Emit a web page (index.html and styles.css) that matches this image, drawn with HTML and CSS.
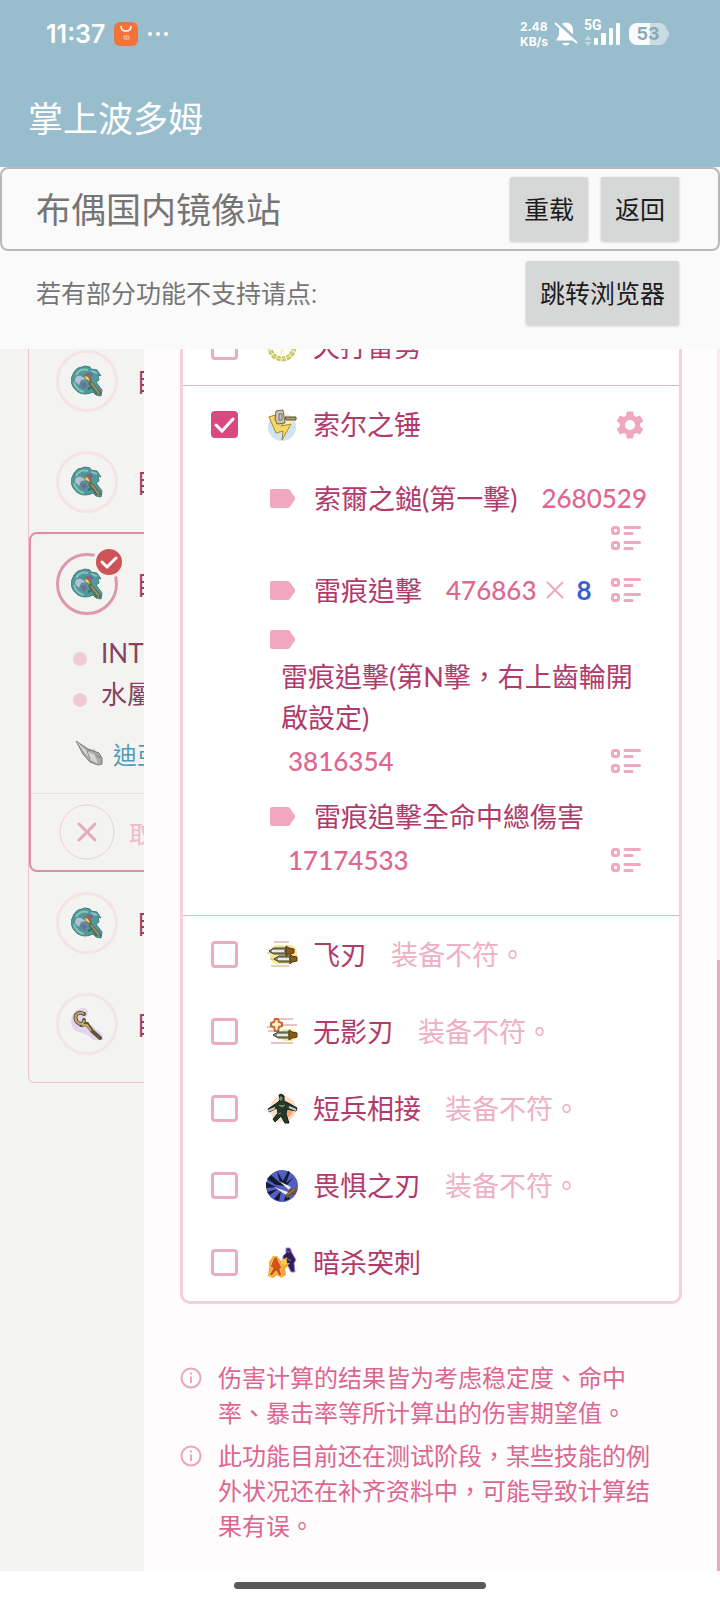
FILE: index.html
```html
<!DOCTYPE html>
<html lang="zh-CN">
<head>
    <meta charset="UTF-8">
    <meta name="viewport" content="width=device-width, initial-scale=1.0">
    <title>掌上波多姆</title>
    <link rel="stylesheet" href="styles.css">
</head>
<body>
    <svg class="sprite" aria-hidden="true">
        <symbol id="tag" viewBox="0 0 25 19">
            <path d="M2 0h15.500q1.500 0 2.500 1.200l5 7.300q.7 1 0 2l-5 7.300q-1 1.200-2.500 1.200H2q-2 0-2-2V2q0-2 2-2z" fill="#f1a7bf"/>
        </symbol>
        <symbol id="list" viewBox="0 0 30 26">
            <g fill="none" stroke="#f1a7bf" stroke-width="3" stroke-linecap="round">
                <rect x="1.500" y="2.500" width="6" height="6" rx="2"/>
                <rect x="1.500" y="17.500" width="6" height="6" rx="2"/>
                <path d="M14 2.500h14.500M14 8.500h7M14 17.500h14.500M14 23.500h7"/>
            </g>
        </symbol>
        <symbol id="axe" viewBox="0 0 32 32">
            <path d="M3 7q3-5 8-5l3-1 5 1 1 2 6 1 4 6-3-1 1 5-3 2 6 8-1 6-5-1-3-3q-8 4-15 0-7-5-7-13z" fill="#4f9a98" stroke="#44807f"/>
            <path d="M5 10q4-7 12-5M20 6l6 2M3 17q2 8 10 10" fill="none" stroke="#83c3bd" stroke-width="2"/>
            <path d="M4 16q0-6 6-5l5 3-5 1-2 5z" fill="#b9bfd3"/>
            <path d="M9 18l5-1 2 3-3 4zM15 8l6-1 1 4-4 2z" fill="#76689f"/>
            <path d="M17 24q3-1 4-3" fill="none" stroke="#356d70" stroke-width="2"/>
            <path d="M13 10l4-1 4 5-2 4-4-3z" fill="#8f6c3f"/>
            <path d="M14 11l3 1 2 4-4-2z" fill="#f4d27a"/>
            <path d="M19 16l11 13M18 18l8 11" stroke="#55694f" stroke-width="2"/>
            <path d="M20 18l8 10" stroke="#a08d60" stroke-width="2"/>
        </symbol>
        <symbol id="info" viewBox="0 0 22 22">
            <circle cx="11" cy="11" r="9.500" fill="none" stroke="#eba5be" stroke-width="2"/>
            <path d="M11 9.500v6.500M11 5.500v2" stroke="#eba5be" stroke-width="2"/>
        </symbol>
    </svg>

    <div class="app">
        <div class="status-bar">
            <span class="clock">11:37</span>
            <svg class="shop-icon" viewBox="0 0 24 24">
                <rect width="24" height="24" rx="6" fill="#f1733a"/>
                <path d="M7 4q0 5 5 5t5-5" fill="none" stroke="#fff" stroke-width="1.500"/>
                <path d="M10 14h5v3h-5zM12.500 14v3" fill="none" stroke="#fbc3a2"/>
            </svg>
            <svg class="more-icon" viewBox="0 0 22 6" fill="#fff">
                <circle cx="3" cy="3" r="2"/><circle cx="11" cy="3" r="2"/><circle cx="19" cy="3" r="2"/>
            </svg>
            <div class="status-right">
                <span class="speed">2.48<br>KB/s</span>
                <svg class="bell-icon" viewBox="0 0 24 26">
                    <path d="M12 1.500q7 .5 7 8v5l3 5H2l3-5v-5q0-7.500 7-8zM8 22h8q-1.500 2.500-4 2.500T8 22z" fill="#fff"/>
                    <path d="M2 0l22 21" stroke="#98bdcd" stroke-width="4"/>
                    <path d="M1 2l22 20" stroke="#fff" stroke-width="2"/>
                </svg>
                <span class="signal">
                    <span class="network">5G</span>
                    <svg class="signal-icon" viewBox="0 0 37 24" fill="#fff">
                        <path d="M4 13l3.500 5h-7zM4 24l3.500-4h-7z" opacity=".4"/>
                        <rect x="10" y="16" width="4" height="7" rx="1"/>
                        <rect x="17" y="11" width="5" height="12" rx="1"/>
                        <rect x="25" y="6" width="4" height="17" rx="1"/>
                        <rect x="32" y="1" width="4" height="22" rx="1"/>
                    </svg>
                </span>
                <span class="battery">53</span>
            </div>
        </div>

        <header class="title-bar">
            <h1>掌上波多姆</h1>
        </header>

        <div class="site-bar">
            <span class="site-name">布偶国内镜像站</span>
            <button class="app-btn">重载</button>
            <button class="app-btn">返回</button>
        </div>
        <div class="jump-bar">
            <span class="jump-text">若有部分功能不支持请点:</span>
            <button class="app-btn">跳转浏览器</button>
        </div>

        <div class="webview" lang="zh-TW">
            <aside class="sidebar">
                <div class="equip-list">
                    <div class="equip">
                        <span class="ring"><svg class="equip-icon"><use href="#axe"/></svg></span>
                        <span class="equip-name">目</span>
                    </div>
                    <div class="equip">
                        <span class="ring"><svg class="equip-icon"><use href="#axe"/></svg></span>
                        <span class="equip-name">目</span>
                    </div>
                    <div class="equip-selected">
                        <div class="equip">
                            <span class="ring active">
                                <svg class="equip-icon"><use href="#axe"/></svg>
                                <svg class="ring-badge" viewBox="0 0 32 32">
                                    <circle cx="16" cy="16" r="16" fill="#f3f4f2"/>
                                    <circle cx="16" cy="16" r="13" fill="#cc5356"/>
                                    <path d="M9 16l5 5 9-9" fill="none" stroke="#fff" stroke-width="3" stroke-linecap="round"/>
                                </svg>
                            </span>
                            <span class="equip-name">目</span>
                        </div>
                        <ul class="stats">
                            <li>INT</li>
                            <li>水屬性</li>
                        </ul>
                        <div class="crystal">
                            <svg class="crystal-icon" viewBox="0 0 28 26">
                                <path d="M1 1l12 8 11 4 3 5v6l-4 1-8-3-7-8z" fill="#a9a9a7" stroke="#777"/>
                                <path d="M1 1l11 10 8 4 3 9-7-4-7-8z" fill="#d5d5d2"/>
                                <path d="M12 11l8-1M20 15l6 3M12 11l3 8" stroke="#8a8a88"/>
                            </svg>
                            <a href="#">迪亞</a>
                        </div>
                        <button class="cancel">
                            <svg class="cancel-icon" viewBox="0 0 56 56" fill="none">
                                <circle cx="28" cy="28" r="27" stroke="#f1cdd6"/>
                                <path d="M20 20l16 16M36 20l-16 16" stroke="#e8aabb" stroke-width="3" stroke-linecap="round"/>
                            </svg>
                            <span>取消</span>
                        </button>
                    </div>
                    <div class="equip">
                        <span class="ring"><svg class="equip-icon"><use href="#axe"/></svg></span>
                        <span class="equip-name">目</span>
                    </div>
                    <div class="equip">
                        <span class="ring">
                            <svg class="equip-icon" viewBox="0 0 32 32" fill="none">
                                <path d="M12 5a8 8 0 0 0-4 14l10 3 10 8" stroke="#e3d5f1" stroke-width="10" stroke-linecap="round" stroke-linejoin="round"/>
                                <path d="M13 6q-5-3-8 1-2 6 4 9 4 0 4-4M10 17l6-1 5 7 8 7" stroke="#625338" stroke-width="4" stroke-linecap="round"/>
                                <path d="M13 6q-5-3-8 1-2 6 4 9 4 0 4-4M11 17l5 0 4 6" stroke="#bda768" stroke-width="2"/>
                            </svg>
                        </span>
                        <span class="equip-name">目</span>
                    </div>
                </div>
            </aside>

            <main class="content">
                <div class="skills">
                    <div class="skill">
                        <input type="checkbox" id="s0">
                        <svg class="skill-icon" viewBox="0 0 32 32" fill="none">
                            <circle cx="16" cy="16" r="12" stroke="#c6c467" stroke-width="5" stroke-dasharray="4 1"/>
                            <circle cx="16" cy="16" r="12" stroke="#ebe9a4"/>
                            <path d="M14 8l-4 9h5l-2 9 8-12h-5l4-6z" fill="#f8f2b0"/>
                        </svg>
                        <label for="s0">天打雷劈</label>
                    </div>

                    <div class="skill-open">
                        <div class="skill">
                            <input type="checkbox" id="s1" checked>
                            <svg class="skill-icon" viewBox="0 0 32 32">
                                <circle cx="16" cy="18" r="14" fill="#cfe3f5"/>
                                <path d="M5 8l9-5 8 2 6 6-4 7H10z" fill="#f6efc8"/>
                                <path d="M3 8l6-2 2 8 8-2-4 5 10-2-9 16 1-9-7 2z" fill="#f3d964" stroke="#a78832"/>
                                <path d="M10 2l7-1 2 13-8 1-2-5z" fill="#c9c6b8" stroke="#6e6858"/>
                                <path d="M13 5h3v6h-3z" fill="none" stroke="#77715f"/>
                                <path d="M19 8h11v3H20z" fill="#b59a6a" stroke="#5d4d36"/>
                            </svg>
                            <label for="s1">索尔之锤</label>
                            <button class="gear" aria-label="設定">
                                <svg viewBox="2 2 20 20" width="28" height="28" fill="#f1a7bf">
                                    <path d="M19.140 12.940c.04-.3.060-.61.060-.94s-.02-.64-.07-.94l2.030-1.580a.49.49 0 0 0 .12-.61l-1.920-3.320a.49.49 0 0 0-.59-.22l-2.390.96c-.5-.38-1.030-.7-1.620-.94l-.36-2.540a.48.48 0 0 0-.48-.41h-3.840c-.24 0-.43.17-.47.41l-.36 2.540c-.59.24-1.130.57-1.620.94l-2.390-.96a.48.48 0 0 0-.59.22L2.740 8.870a.48.48 0 0 0 .12.610l2.030 1.580c-.05.3-.09.63-.09.94s.02.64.07.94l-2.030 1.580a.49.49 0 0 0-.12.610l1.920 3.320c.12.22.37.29.59.22l2.390-.96c.5.38 1.030.7 1.620.94l.36 2.540c.05.24.24.41.48.41h3.840c.24 0 .44-.17.47-.41l.36-2.540c.59-.24 1.130-.56 1.620-.94l2.390.96c.22.08.47 0 .59-.22l1.920-3.320a.48.48 0 0 0-.12-.61zM12 15.600a3.600 3.600 0 1 1 0-7.200 3.600 3.600 0 0 1 0 7.200z"/>
                                </svg>
                            </button>
                        </div>
                        <div class="hits">
                            <div class="hit">
                                <svg class="tag"><use href="#tag"/></svg>
                                <span class="hit-name">索爾之鎚(第一擊)</span>
                                <span class="damage">2680529</span>
                                <button class="detail" aria-label="詳細"><svg class="list-icon"><use href="#list"/></svg></button>
                            </div>
                            <div class="hit">
                                <svg class="tag"><use href="#tag"/></svg>
                                <span class="hit-name">雷痕追擊</span>
                                <span class="damage">476863</span>
                                <svg class="times" viewBox="0 0 18 18"><path d="M1 1l16 16M17 1L1 17" stroke="#f1a7bf" stroke-width="2"/></svg>
                                <span class="count">8</span>
                                <button class="detail" aria-label="詳細"><svg class="list-icon"><use href="#list"/></svg></button>
                            </div>
                            <div class="hit">
                                <svg class="tag"><use href="#tag"/></svg>
                                <span class="hit-name">雷痕追擊(第N擊，右上齒輪開啟設定)</span>
                                <span class="damage">3816354</span>
                                <button class="detail" aria-label="詳細"><svg class="list-icon"><use href="#list"/></svg></button>
                            </div>
                            <div class="hit">
                                <svg class="tag"><use href="#tag"/></svg>
                                <span class="hit-name">雷痕追擊全命中總傷害</span>
                                <span class="damage">17174533</span>
                                <button class="detail" aria-label="詳細"><svg class="list-icon"><use href="#list"/></svg></button>
                            </div>
                        </div>
                    </div>

                    <div class="skill">
                        <input type="checkbox" id="s2">
                        <svg class="skill-icon" viewBox="0 0 32 32">
                            <rect x="4" y="6" width="27" height="19" rx="8" fill="#f0eb92"/>
                            <path d="M8 3h15M1 14h8M4 20h6M5 27h18" stroke="#cf9a8c"/>
                            <path d="M3 12l5-3h12v6H8z" fill="#8d9282" stroke="#3d3c29"/>
                            <path d="M8 20l5-3h12v6H13z" fill="#8d9282" stroke="#3d3c29"/>
                            <path d="M6 12h12M12 20h11" stroke="#e6ebdf" stroke-width="2"/>
                            <path d="M20 7l3 2 5 1v4l-5 1-3 2zM24 15l2 2 5 1v4l-5 1-2 2z" fill="#8b5b1c" stroke="#54350e"/>
                        </svg>
                        <label for="s2">飞刃</label>
                        <span class="mismatch">装备不符。</span>
                    </div>
                    <div class="skill">
                        <input type="checkbox" id="s3">
                        <svg class="skill-icon" viewBox="0 0 32 32">
                            <rect x="14" y="13" width="17" height="12" rx="6" fill="#f0eb92"/>
                            <path d="M13 3h14M1 11h6M17 9h14M2 15h12M5 27h22" stroke="#cf8c80"/>
                            <path d="M9 3h3l1 3 3 1v3l-3 1-1 4H9l-1-4-3-1V7l3-1z" fill="#fdf0b8" stroke="#c8683a" stroke-width="2"/>
                            <path d="M7 19l5-3h12v6H12z" fill="#8d9282" stroke="#3d3c29"/>
                            <path d="M11 19h11" stroke="#e6ebdf" stroke-width="2"/>
                            <path d="M23 14l3 2 5 1v4l-5 1-3 2z" fill="#8b5b1c" stroke="#54350e"/>
                        </svg>
                        <label for="s3">无影刃</label>
                        <span class="mismatch">装备不符。</span>
                    </div>
                    <div class="skill">
                        <input type="checkbox" id="s4">
                        <svg class="skill-icon" viewBox="0 0 32 32">
                            <circle cx="17" cy="16" r="13" fill="#fbdcc4"/>
                            <circle cx="19" cy="17" r="8" fill="#f4a878"/>
                            <path d="M13 2q3-2 5 1l0 5 6 3 7 4-1 3-9-2-1 5 3 9h-4l-4-7-6 6-2-3 5-6-1-5-8 4-1-3 9-6 3-3z" fill="#26382a" stroke="#121b15"/>
                            <path d="M14 4h2v3h-2zM13 12l3 2 3-2M12 21l3-1" fill="#6b8c63" stroke="#78936d"/>
                            <path d="M2 18l7-3M23 14l7 3" stroke="#c3cdc5" stroke-width="2"/>
                        </svg>
                        <label for="s4">短兵相接</label>
                        <span class="mismatch">装备不符。</span>
                    </div>
                    <div class="skill">
                        <input type="checkbox" id="s5">
                        <svg class="skill-icon" viewBox="0 0 32 32">
                            <circle cx="16" cy="16" r="16" fill="#5360bd"/>
                            <path d="M5 5l9 8-3-12 6 10 5-10 2 1-4 11 8-6-8 9-10-1-9-6zM0 12l10 5-10 1zM1 22l11-3-8 6zM8 29l7-8-2 10zM18 31l2-8 4 6z" fill="#151938"/>
                            <path d="M8 17l14 5-2 3zM13 11l12 6-2 3z" fill="#e9edf5"/>
                            <path d="M20 27l10-8M23 20l6 4" stroke="#6b5230" stroke-width="4"/>
                            <path d="M21 25l8-6" stroke="#b39757"/>
                        </svg>
                        <label for="s5">畏惧之刃</label>
                        <span class="mismatch">装备不符。</span>
                    </div>
                    <div class="skill">
                        <input type="checkbox" id="s6">
                        <svg class="skill-icon" viewBox="0 0 32 32">
                            <path d="M20 1h4l2 5 4 7-2 3 1 9h-4l-3-6-5-1 0-9 3-3z" fill="#2c2053" stroke="#a883dd"/>
                            <path d="M21 4l3 1M20 11l5 3" stroke="#5c4ba6" stroke-width="2"/>
                            <path d="M3 15l4-6 4 0 4 5 6-4-1 6 4 0-5 6 1 6-5 3-4-3-4 3-5-2 1-7z" fill="#f6a53a"/>
                            <path d="M8 10h3l2 5 3 6-2 1 2 7h-3l-3-5-4 5-3-1 4-7-3-1z" fill="#d2521f" stroke="#f9cf52"/>
                            <circle cx="18" cy="15" r="3" fill="#f9cf4a"/>
                        </svg>
                        <label for="s6">暗杀突刺</label>
                    </div>
                </div>

                <ul class="notes">
                    <li>
                        <svg class="info-icon"><use href="#info"/></svg>
                        <p>伤害计算的结果皆为考虑稳定度、命中率、暴击率等所计算出的伤害期望值。</p>
                    </li>
                    <li>
                        <svg class="info-icon"><use href="#info"/></svg>
                        <p>此功能目前还在测试阶段，某些技能的例外状况还在补齐资料中，可能导致计算结果有误。</p>
                    </li>
                </ul>
            </main>
            <div class="scrollbar"><div class="scroll-thumb"></div></div>
        </div>

        <div class="nav-bar"><div class="nav-pill"></div></div>
    </div>
</body>
</html>
```

FILE: styles.css
```css
* {
    box-sizing: border-box;
}

body {
    margin: 0;
    font-family: Roboto, "Noto Sans CJK SC", sans-serif;
    background-color: #fafafa;
}

h1, ul, p {
    margin: 0;
    padding: 0;
}

button {
    padding: 0;
    border: none;
    background: none;
    font-family: inherit;
    cursor: pointer;
}

svg {
    display: block;
    flex-shrink: 0;
}

.sprite {
    display: none;
}

.app {
    display: flex;
    flex-direction: column;
    height: 100vh;
}

/* status bar */
.status-bar {
    display: flex;
    align-items: center;
    height: 67px;
    padding: 0 53px 0 46px;
    background-color: #98bdcd;
    color: white;
    flex-shrink: 0;
}

.clock {
    font-family: Inter, sans-serif;
    font-size: 25px;
    font-weight: 600;
}

.shop-icon {
    width: 24px;
    height: 24px;
    margin: 0 9px;
}

.more-icon {
    width: 22px;
}

.status-right {
    display: flex;
    align-items: center;
    gap: 6px;
    margin-left: auto;
}

.speed {
    font-family: Inter, sans-serif;
    font-size: 12px;
    font-weight: 700;
    line-height: 15px;
}

.bell-icon {
    width: 24px;
    height: 26px;
}

.signal {
    position: relative;
    padding-right: 2px;
}

.network {
    position: absolute;
    top: -4px;
    left: 0;
    font-size: 14px;
    font-weight: 700;
    line-height: 14px;
}

.signal-icon {
    width: 37px;
    height: 24px;
}

.battery {
    position: relative;
    width: 38px;
    border-radius: 8px;
    background: linear-gradient(to right, #f8fbfc 56%, #c9dce4 56%);
    color: #8aa9b6;
    font-family: Inter, sans-serif;
    font-size: 18px;
    font-weight: 700;
    line-height: 22px;
    text-align: center;
}

.battery::after {
    content: "";
    position: absolute;
    top: 7px;
    right: -2px;
    width: 3px;
    height: 8px;
    border-radius: 0 4px 4px 0;
    background-color: #c9dce4;
}

/* app header */
.title-bar {
    display: flex;
    align-items: center;
    height: 100px;
    padding: 0 28px 2px;
    background-color: #98bdcd;
    color: white;
    flex-shrink: 0;
}

.title-bar h1 {
    font-size: 35px;
    font-weight: 400;
}

.site-bar {
    display: flex;
    align-items: center;
    gap: 13px;
    height: 84px;
    padding: 0 39px 0 34px;
    border: 2px solid #b9b9b9;
    border-radius: 8px;
    flex-shrink: 0;
}

.site-name {
    flex: 1;
    padding-bottom: 4px;
    color: #757575;
    font-size: 35px;
}

.jump-bar {
    display: flex;
    align-items: center;
    height: 98px;
    padding: 0 41px 14px 36px;
    flex-shrink: 0;
}

.jump-text {
    flex: 1;
    padding-bottom: 2px;
    color: #757575;
    font-size: 25px;
}

.app-btn {
    height: 64px;
    padding: 0 14px 2px;
    border-radius: 2px;
    background-color: #d6d7d7;
    box-shadow: 0 1px 3px rgba(0,0,0,0.2);
    color: #1c1c1c;
    font-size: 25px;
}

/* page area */
.webview {
    display: flex;
    flex: 1;
    min-height: 0;
    overflow: hidden;
    background-color: #fffcfd;
    font-family: Lato, "Noto Sans CJK TC", sans-serif;
}

.sidebar {
    width: 20%;
    padding-left: 28px;
    overflow: hidden;
    background-color: #f3f4f2;
}

.equip-list {
    width: 320px;
    margin-top: -20px;
    padding-bottom: 8px;
    border: 1px solid #efc0cd;
    border-radius: 6px;
}

.equip {
    display: flex;
    align-items: center;
    gap: 18px;
    height: 101px;
    padding-left: 27px;
}

.ring {
    position: relative;
    display: flex;
    align-items: center;
    justify-content: center;
    width: 62px;
    height: 62px;
    border: 3px solid #f4e3e7;
    border-radius: 50%;
}

.ring.active {
    border-color: #df97ae;
}

.equip-icon {
    width: 32px;
    height: 32px;
}

.ring-badge {
    position: absolute;
    top: -10px;
    right: -10px;
    width: 32px;
    height: 32px;
}

.equip-name {
    color: #9c3c63;
    font-size: 26px;
}

.equip-selected {
    border: 2px solid #dc8fa7;
    border-radius: 8px;
}

.equip-selected .equip {
    height: 99px;
    padding-left: 25px;
}

.stats {
    padding-left: 42px;
    list-style: none;
}

.stats li {
    display: flex;
    align-items: center;
    gap: 14px;
    color: #86425f;
    font-size: 26px;
    line-height: 41px;
}

.stats li::before {
    content: "";
    width: 14px;
    height: 14px;
    margin-top: 10px;
    border-radius: 50%;
    background-color: #efcbd6;
}

.crystal {
    display: flex;
    align-items: center;
    gap: 10px;
    height: 79px;
    padding: 0 0 2px 44px;
    border-bottom: 1px solid #f5dbe1;
}

.crystal-icon {
    width: 28px;
    height: 26px;
}

.crystal a {
    color: #4f9cb8;
    font-size: 24px;
    text-decoration: none;
}

.cancel {
    display: flex;
    align-items: center;
    gap: 14px;
    height: 76px;
    padding-left: 28px;
    color: #efbac8;
    font-size: 24px;
}

.cancel-icon {
    width: 56px;
    height: 56px;
}

.content {
    flex: 1;
    min-width: 0;
    padding: 0 35px 0 36px;
}

.skills {
    margin-top: -41px;
    border: 3px solid #f5cfdb;
    border-top: none;
    border-radius: 10px;
    background-color: white;
}

.skill {
    display: flex;
    align-items: center;
    height: 77px;
    padding: 0 25px 0 28px;
    font-size: 27px;
}

.skill input {
    appearance: none;
    width: 27px;
    height: 27px;
    margin: 0 28px 0 0;
    border: 3px solid #ecacc0;
    border-radius: 4px;
}

.skill input:checked {
    border: none;
    background: #d9487e url("data:image/svg+xml,%3Csvg xmlns='http://www.w3.org/2000/svg' viewBox='0 0 27 27'%3E%3Cpath d='M5 14l6 6 11-12' fill='none' stroke='white' stroke-width='3' stroke-linecap='round'/%3E%3C/svg%3E");
}

.skill-icon {
    width: 32px;
    height: 32px;
    margin-right: 15px;
}

.skill label,
.mismatch {
    padding-bottom: 2px;
}

.skill label {
    color: #b23a6b;
}

.mismatch {
    margin-left: 24px;
    color: #efafc3;
}

.gear {
    margin: 0 10px 0 auto;
}

.skill-open {
    border-top: 1px solid #ebb0c2;
    border-bottom: 1px solid #ebb0c2;
}

.hits {
    display: flex;
    flex-direction: column;
    gap: 14px;
    padding: 14px 25px 34px 87px;
}

.hit {
    display: flex;
    flex-wrap: wrap;
    align-items: center;
    row-gap: 2px;
}

.tag {
    width: 25px;
    height: 19px;
    margin: 5px 8px 5px 0;
}

.hit-name {
    margin-right: 6px;
    padding-left: 11px;
    color: #b23a6b;
    font-size: 27px;
    line-height: 41px;
}

.damage {
    padding-left: 18px;
    color: #e0668f;
    font-size: 26px;
    font-weight: 500;
    line-height: 42px;
}

.times {
    width: 18px;
    height: 18px;
    margin: 0 12px 0 10px;
}

.count {
    color: #3a5fd0;
    font-size: 26px;
    font-weight: 700;
}

.detail {
    height: 34px;
    margin: 0 13px 0 auto;
}

.list-icon {
    width: 30px;
    height: 26px;
}

.notes {
    display: flex;
    flex-direction: column;
    gap: 8px;
    padding: 56px 17px 0 0;
    list-style: none;
}

.notes li {
    display: flex;
    gap: 16px;
}

.notes p {
    color: #dc6690;
    font-size: 24px;
    line-height: 35px;
}

.info-icon {
    width: 22px;
    height: 22px;
    margin-top: 7px;
}

.scrollbar {
    display: flex;
    flex-direction: column;
    justify-content: flex-end;
    width: 3px;
    background-color: #fde9f0;
}

.scroll-thumb {
    height: 50%;
    background-color: #f0a6c0;
}

.nav-bar {
    display: flex;
    align-items: center;
    justify-content: center;
    height: 29px;
    background-color: white;
    flex-shrink: 0;
}

.nav-pill {
    width: 35%;
    height: 7px;
    border-radius: 4px;
    background-color: #595959;
}
```
